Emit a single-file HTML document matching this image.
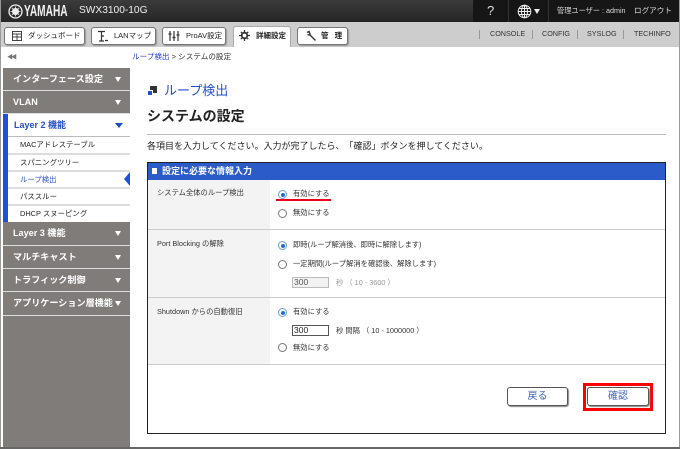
<!DOCTYPE html>
<html lang="ja"><head><meta charset="utf-8"><title>システムの設定</title>
<style>
*{box-sizing:border-box}
html,body{margin:0;padding:0}
body{width:680px;height:449px;position:relative;overflow:hidden;background:#fff;font-family:"Liberation Sans","Noto Sans CJK JP",sans-serif;color:#222;text-spacing-trim:space-all}
.t{position:absolute;white-space:nowrap;line-height:1}
.tab{position:absolute;top:27px;height:18px;background:#fff;border:1px solid #777;border-radius:3px;box-shadow:1px 1px 1px #999}
.mh{position:absolute;left:3px;width:127px;height:22px;background:#807c79;color:#fff;font-weight:bold;font-size:9.1px;line-height:22px;padding-left:10px;white-space:nowrap}
.mh:after{content:"";position:absolute;right:9px;top:9px;border:3.5px solid transparent;border-top:5px solid #fff;border-bottom:0}
.mi{position:absolute;left:8px;width:122px;background:#fff;border-bottom:2px solid #ddd;font-size:7.4px;line-height:15px;padding-left:12px;color:#222;white-space:nowrap}
.r{position:absolute;width:9px;height:9px;border:1px solid #777;border-radius:50%;background:#fff}
.r.on{border-color:#6a9fd8}
.r.on:after{content:"";position:absolute;left:1.5px;top:1.5px;width:4px;height:4px;border-radius:50%;background:#1d6fd0}
.s{font-size:7.3px;color:#333}
.h{font-size:7.5px}
.n{font-size:7.2px;color:#333;top:30px}
.sep{position:absolute;top:30px;width:1px;height:9px;background:#999}
.inp{position:absolute;width:37px;height:11px;border:1px solid #555;font-size:8.5px;line-height:9px;padding-left:1px;background:#fff;color:#222}
.btn{position:absolute;top:387px;height:19px;border:1px solid #555;border-radius:3px;background:#fff;box-shadow:1px 1px 1px #888;color:#3f62b8;font-size:10px;line-height:17px;text-align:center}
</style></head><body>
<div style="position:absolute;left:0;top:0;width:473px;height:22px;background:linear-gradient(#3c3c3c,#252525)"></div>
<div style="position:absolute;left:473px;top:0;width:207px;height:22px;background:#161616"></div>
<div style="position:absolute;left:508px;top:0;width:1px;height:22px;background:#333"></div>
<div style="position:absolute;left:548px;top:0;width:1px;height:22px;background:#333"></div>
<svg style="position:absolute;left:8px;top:4px" width="15" height="15" viewBox="0 0 15 15"><circle cx="7.5" cy="7.5" r="6.5" fill="none" stroke="#eee" stroke-width="1.3"/><circle cx="7.5" cy="7.5" r="3.5" fill="#eee"/><path d="M7.5 2.5V12.5M2.5 7.5H12.5M4 4L11 11M11 4L4 11" stroke="#eee" stroke-width=".8"/></svg>
<div class="t" style="left:24px;top:4px;font-size:15.5px;font-weight:bold;color:#f0f0f0;transform:scaleX(.655);transform-origin:0 0">YAMAHA</div>
<div class="t" style="left:79px;top:6px;font-size:10.2px;color:#eee">SWX3100-10G</div>
<div class="t" style="left:487px;top:4px;font-size:13px;color:#ddd">?</div>
<svg style="position:absolute;left:517px;top:4px" width="15" height="15" viewBox="0 0 15 15" fill="none" stroke="#eee" stroke-width="1"><circle cx="7.5" cy="7.5" r="6.3"/><ellipse cx="7.5" cy="7.5" rx="3" ry="6.3"/><path d="M7.5 1V14M1 7.5H14M2 4.5H13M2 10.5H13"/></svg>
<div style="position:absolute;left:534px;top:9px;border:3.5px solid transparent;border-top:5px solid #eee;border-bottom:0"></div>
<div class="t" style="left:557px;top:7px;font-size:7.2px;color:#ddd">管理ユーザー : admin</div>
<div class="t" style="left:634px;top:7px;font-size:7.6px;color:#ddd">ログアウト</div>

<div style="position:absolute;left:0;top:22px;width:680px;height:25px;background:#cdcdcd"></div>
<div class="tab" style="left:4px;width:81px"></div>
<svg style="position:absolute;left:11px;top:30px" width="12" height="12" viewBox="0 0 12 12" fill="none" stroke="#444"><rect x="1.5" y="1.5" width="9" height="9"/><path d="M1 4H11M6 4V10.5M1.5 7H10"/></svg>
<div class="t h" style="left:28px;top:32px">ダッシュボード</div>
<div class="tab" style="left:91px;width:65px"></div>
<svg style="position:absolute;left:97px;top:30px" width="12" height="12" viewBox="0 0 12 12" fill="none" stroke="#333"><path d="M1 1.5H8M4.5 1.5V11M2 11H7M4.5 6H7M8 10.5H11" stroke-width="1.2"/></svg>
<div class="t h" style="left:114px;top:32px">LANマップ</div>
<div class="tab" style="left:162px;width:64px"></div>
<svg style="position:absolute;left:168px;top:30px" width="12" height="12" viewBox="0 0 12 12" fill="none" stroke="#333" stroke-width="1.2"><path d="M2 1V11M6 1V11M10 1V11M.5 4H3.5M4.5 7.5H7.5M8.5 5H11.5"/></svg>
<div class="t h" style="left:186px;top:32px">ProAV設定</div>
<div style="position:absolute;left:233px;top:26px;width:58px;height:21px;background:#fff;border:1px solid #aaa;border-bottom:0;border-radius:3px 3px 0 0"></div>
<svg style="position:absolute;left:239px;top:30px" width="11" height="11" viewBox="0 0 11 11"><circle cx="5.5" cy="5.5" r="2.8" fill="none" stroke="#333" stroke-width="1.8"/><path d="M5.5 0V11M0 5.5H11M1.8 1.8L9.2 9.2M9.2 1.8L1.8 9.2" stroke="#333" stroke-width="1.3" stroke-dasharray="2 7"/></svg>
<div class="t h" style="left:256px;top:32px;font-weight:bold">詳細設定</div>
<div class="tab" style="left:297px;width:51px"></div>
<svg style="position:absolute;left:305px;top:30px" width="12" height="12" viewBox="0 0 12 12" fill="none" stroke="#333"><path d="M2 2.5L4 1.5L5 4L4 5L2.5 4.5M4.5 4.5L10.5 10.5" stroke-width="1.4"/></svg>
<div class="t h" style="left:321px;top:32px;font-weight:bold;word-spacing:4px">管 理</div>
<div class="sep" style="left:479px"></div>
<div class="t n" style="left:490px">CONSOLE</div>
<div class="sep" style="left:532px"></div>
<div class="t n" style="left:542px">CONFIG</div>
<div class="sep" style="left:577px"></div>
<div class="t n" style="left:587px">SYSLOG</div>
<div class="sep" style="left:623px"></div>
<div class="t n" style="left:634px">TECHINFO</div>

<div class="t" style="left:7px;top:55px;font-size:6px;color:#777;letter-spacing:-2px">◀◀</div>
<div class="t" style="left:132px;top:53px;font-size:7.6px;color:#333"><span style="color:#1f3fd0">ループ検出</span> &gt; システムの設定</div>

<div style="position:absolute;left:3px;top:68px;width:127px;height:381px;background:#807c79"></div>
<div style="position:absolute;left:0;top:0;width:1px;height:449px;background:#999"></div>
<div class="mh" style="top:68px">インターフェース設定</div>
<div style="position:absolute;left:3px;top:90px;width:127px;height:1px;background:#ddd"></div>
<div class="mh" style="top:91px">VLAN</div>
<div style="position:absolute;left:3px;top:113px;width:127px;height:1px;background:#ddd"></div>
<div style="position:absolute;left:3px;top:114px;width:127px;height:108px;background:#fff"></div>
<div style="position:absolute;left:3px;top:114px;width:5px;height:108px;background:#1d4fe0"></div>
<div class="t" style="left:14px;top:121px;font-size:9px;font-weight:bold;color:#2250c8">Layer 2 機能</div>
<div style="position:absolute;left:115px;top:123px;border:4px solid transparent;border-top:5px solid #1d4fc8;border-bottom:0"></div>
<div style="position:absolute;left:8px;top:136px;width:122px;height:1px;background:#bbb"></div>
<div class="mi" style="top:137px;height:18px">MACアドレステーブル</div>
<div class="mi" style="top:155px;height:17px">スパニングツリー</div>
<div class="mi" style="top:172px;height:17px;color:#2250c8">ループ検出</div>
<div class="mi" style="top:189px;height:17px">パススルー</div>
<div class="mi" style="top:206px;height:16px;border-bottom:0">DHCP スヌーピング</div>
<div style="position:absolute;left:124px;top:172px;border:7px solid transparent;border-right:6px solid #1d4fe0;border-left:0"></div>
<div class="mh" style="top:222px">Layer 3 機能</div>
<div style="position:absolute;left:3px;top:245px;width:127px;height:1px;background:#ddd"></div>
<div class="mh" style="top:246px">マルチキャスト</div>
<div style="position:absolute;left:3px;top:268px;width:127px;height:1px;background:#ddd"></div>
<div class="mh" style="top:269px">トラフィック制御</div>
<div style="position:absolute;left:3px;top:291px;width:127px;height:1px;background:#ddd"></div>
<div class="mh" style="top:292px">アプリケーション層機能</div>
<div style="position:absolute;left:3px;top:315px;width:127px;height:1px;background:#ddd"></div>

<div style="position:absolute;left:147px;top:86px;width:10px;height:10px"><div style="position:absolute;left:3px;top:0;width:7px;height:7px;background:#333"></div><div style="position:absolute;left:0;top:4px;width:6px;height:6px;background:#2250c8;border:1px solid #fff"></div></div>
<div class="t" style="left:164px;top:84px;font-size:13px;color:#2250c8">ループ検出</div>
<div class="t" style="left:147px;top:109px;font-size:14px;font-weight:bold;color:#222">システムの設定</div>
<div style="position:absolute;left:147px;top:134px;width:519px;height:1px;background:#bbb"></div>
<div class="t" style="left:147px;top:142px;font-size:9px;color:#222">各項目を入力してください。入力が完了したら、「確認」ボタンを押してください。</div>

<div style="position:absolute;left:147px;top:162px;width:519px;height:272px;border:1px solid #222"></div>
<div style="position:absolute;left:148px;top:163px;width:517px;height:17px;background:#2a5bc8"></div>
<div style="position:absolute;left:152px;top:168px;width:5px;height:6px;background:#fff"></div>
<div class="t" style="left:162px;top:167px;font-size:9px;font-weight:bold;color:#fff">設定に必要な情報入力</div>
<div style="position:absolute;left:148px;top:180px;width:122px;height:184px;background:#f3f3f3"></div>
<div style="position:absolute;left:148px;top:229px;width:517px;height:1px;background:#ccc"></div>
<div style="position:absolute;left:148px;top:297px;width:517px;height:1px;background:#ccc"></div>
<div style="position:absolute;left:148px;top:364px;width:517px;height:1px;background:#ccc"></div>

<div class="t s" style="left:157px;top:189px">システム全体のループ検出</div>
<div class="r on" style="left:278px;top:190px"></div>
<div class="t s" style="left:293px;top:190px">有効にする</div>
<div style="position:absolute;left:276px;top:199px;width:55px;height:2px;background:#e8001c"></div>
<div class="r" style="left:278px;top:209px"></div>
<div class="t s" style="left:293px;top:209px">無効にする</div>

<div class="t s" style="left:157px;top:240px">Port Blocking の解除</div>
<div class="r on" style="left:278px;top:241px"></div>
<div class="t s" style="left:293px;top:241px">即時(ループ解消後、即時に解除します)</div>
<div class="r" style="left:278px;top:260px"></div>
<div class="t s" style="left:293px;top:260px">一定期間(ループ解消を確認後、解除します)</div>
<div class="inp" style="left:292px;top:277px;border-color:#bbb;background:#f2f2f2;color:#555">300</div>
<div class="t s" style="left:336px;top:279px;color:#999">秒 （ 10 - 3600 ）</div>

<div class="t s" style="left:157px;top:308px">Shutdown からの自動復旧</div>
<div class="r on" style="left:278px;top:308px"></div>
<div class="t s" style="left:293px;top:308px">有効にする</div>
<div class="inp" style="left:292px;top:325px">300</div>
<div class="t s" style="left:336px;top:327px">秒 間隔 （ 10 - 1000000 ）</div>
<div class="r" style="left:278px;top:343px"></div>
<div class="t s" style="left:293px;top:344px">無効にする</div>

<div class="btn" style="left:507px;width:61px">戻る</div>
<div style="position:absolute;left:583px;top:383px;width:70px;height:28px;border:3px solid #f00"></div>
<div class="btn" style="left:587px;width:62px">確認</div>

<div style="position:absolute;left:679px;top:0;width:1px;height:449px;background:#999"></div>
<div style="position:absolute;left:0;top:447px;width:680px;height:2px;background:#666"></div>
</body></html>
